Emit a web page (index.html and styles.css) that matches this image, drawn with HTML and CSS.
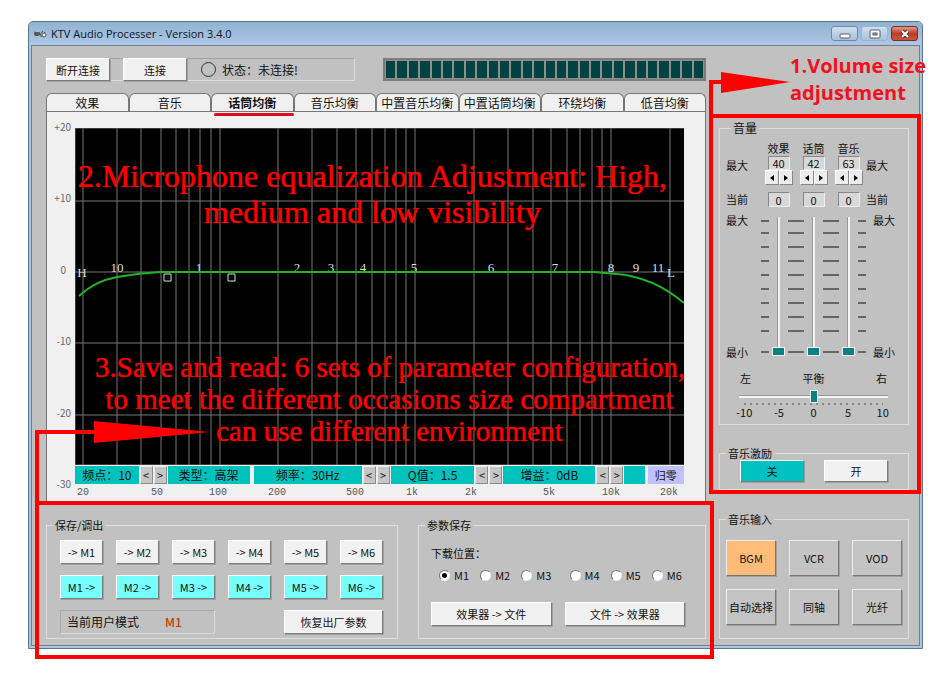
FILE: index.html
```html
<!DOCTYPE html>
<html lang="zh-CN">
<head>
<meta charset="utf-8">
<title>KTV Audio Processer - Version 3.4.0</title>
<link rel="stylesheet" href="styles.css">
</head>
<body>
<div class="window">
  <header class="titlebar">
    <svg class="app-icon" viewBox="0 0 14 10" width="14" height="10" aria-hidden="true">
      <ellipse cx="4" cy="5" rx="3" ry="2" fill="#555"/><path d="M1 3l3 1M7 6l3-4M8 8l4-5M6 3l2 4" stroke="#555" fill="none"/><circle cx="11" cy="6" r="2" fill="#fff" stroke="#555"/>
    </svg>
    <h1 class="title">KTV Audio Processer - Version 3.4.0</h1>
    <div class="win-controls">
      <button class="win-btn" aria-label="最小化"><svg viewBox="0 0 12 10" width="12" height="10"><rect x="1" y="5" width="10" height="4" rx="1" fill="#fff" stroke="#55606e"/></svg></button>
      <button class="win-btn faded" aria-label="最大化"><svg viewBox="0 0 12 10" width="12" height="10"><rect x="1" y="1" width="10" height="8" rx="1" fill="#fff" stroke="#55606e"/><rect x="4" y="4" width="4" height="2" fill="#9ab" stroke="#55606e"/></svg></button>
      <button class="win-btn close" aria-label="关闭"><svg viewBox="0 0 12 10" width="12" height="10"><path d="M3 2l6 6M9 2l-6 6" stroke="#5b3030" stroke-width="4"/><path d="M3 2l6 6M9 2l-6 6" stroke="#fff" stroke-width="2"/></svg></button>
    </div>
  </header>

  <div class="client">
    <main class="main">
      <div class="toolbar">
        <div class="connection">
          <button class="btn">断开连接</button>
          <button class="btn">连接</button>
          <span class="lamp"></span>
          <span class="status">状态：未连接!</span>
        </div>
        <div class="meter" role="img" aria-label="电平">
          <i></i><i></i><i></i><i></i><i></i><i></i><i></i><i></i><i></i><i></i><i></i><i></i><i></i><i></i>
          <i></i><i></i><i></i><i></i><i></i><i></i><i></i><i></i><i></i><i></i><i></i><i></i><i></i><i></i>
        </div>
      </div>

      <nav class="tabs">
        <button class="tab">效果</button>
        <button class="tab">音乐</button>
        <button class="tab active">话筒均衡</button>
        <button class="tab">音乐均衡</button>
        <button class="tab">中置音乐均衡</button>
        <button class="tab">中置话筒均衡</button>
        <button class="tab">环绕均衡</button>
        <button class="tab">低音均衡</button>
      </nav>

      <section class="eq">
        <div class="gain-axis">
          <span>+20</span><span>+10</span><span class="zero">0</span><span>-10</span><span>-20</span><span>-30</span>
        </div>
        <div class="plot">
          <svg class="graph" viewBox="0 0 609 337">
            <rect width="609" height="337" fill="#000"/>
            <path class="grid-line" d="M8 0V337M42 0V337M66 0V337M86 0V337M101 0V337M114 0V337M125 0V337M136 0V337M145 0V337M203 0V337M237 0V337M262 0V337M281 0V337M297 0V337M310 0V337M321 0V337M331 0V337M340 0V337M399 0V337M433 0V337M458 0V337M476 0V337M492 0V337M505 0V337M517 0V337M527 0V337M536 0V337M595 0V337M0 73H609M0 144H609M0 215H609M0 287H609M0 0H609M0 337H609M0 0V337"/>
            <g class="node-labels">
              <text x="7" y="149">H</text><text x="42" y="144">10</text><text x="124" y="144">1</text><text x="222" y="144">2</text><text x="256" y="144">3</text><text x="288" y="144">4</text><text x="339" y="144">5</text><text x="416" y="144">6</text><text x="480" y="144">7</text><text x="536" y="144">8</text><text x="561" y="144">9</text><text x="583" y="144">11</text><text x="596" y="149">L</text>
            </g>
            <path class="curve" d="M4 168Q20 153 42 149T86 144H519L542 146Q578 149 609 175"/>
            <path class="handles" d="M89 146h7v7h-7zM153 146h7v7h-7z"/>
          </svg>
          <p class="note note-mic">2.Microphone equalization Adjustment: High,<br>medium and low visibility</p>
          <p class="note note-save">3.Save and read: 6 sets of parameter configuration,<br>to meet the different occasions size compartment<br>can use different environment</p>
        </div>
        <div class="params">
          <span class="param">频点：10</span>
          <button class="step" aria-label="上一频点">&lt;</button><button class="step" aria-label="下一频点">&gt;</button>
          <span class="param type">类型：高架</span>
          <span class="param">频率：30Hz</span>
          <button class="step" aria-label="降低频率">&lt;</button><button class="step" aria-label="提高频率">&gt;</button>
          <span class="param">Q值：1.5</span>
          <button class="step" aria-label="降低Q值">&lt;</button><button class="step" aria-label="提高Q值">&gt;</button>
          <span class="param">增益：0dB</span>
          <button class="step" aria-label="降低增益">&lt;</button><button class="step" aria-label="提高增益">&gt;</button>
          <span class="param"></span>
          <button class="reset">归零</button>
        </div>
        <svg class="freq-axis" viewBox="0 0 609 18">
          <text x="8" y="11">20</text><text x="82" y="11">50</text><text x="143" y="11">100</text><text x="202" y="11">200</text><text x="280" y="11">500</text><text x="337" y="11">1k</text><text x="396" y="11">2k</text><text x="474" y="11">5k</text><text x="536" y="11">10k</text><text x="594" y="11">20k</text>
        </svg>
      </section>

      <div class="lower">
        <fieldset class="group presets">
          <legend>保存/调出</legend>
          <div class="preset-grid">
            <button class="btn">-&gt; M1</button><button class="btn">-&gt; M2</button><button class="btn">-&gt; M3</button><button class="btn">-&gt; M4</button><button class="btn">-&gt; M5</button><button class="btn">-&gt; M6</button>
            <button class="btn cyan">M1 -&gt;</button><button class="btn cyan">M2 -&gt;</button><button class="btn cyan">M3 -&gt;</button><button class="btn cyan">M4 -&gt;</button><button class="btn cyan">M5 -&gt;</button><button class="btn cyan">M6 -&gt;</button>
            <div class="mode"><span>当前用户模式</span><output>M1</output></div>
            <button class="btn factory">恢复出厂参数</button>
          </div>
        </fieldset>
        <fieldset class="group files">
          <legend>参数保存</legend>
          <p class="slot-title">下载位置：</p>
          <div class="slots">
            <label><input type="radio" name="slot" checked>M1</label>
            <label><input type="radio" name="slot">M2</label>
            <label><input type="radio" name="slot">M3</label>
            <label class="second"><input type="radio" name="slot">M4</label>
            <label><input type="radio" name="slot">M5</label>
            <label><input type="radio" name="slot">M6</label>
          </div>
          <div class="file-actions">
            <button class="btn">效果器 -&gt; 文件</button>
            <button class="btn">文件 -&gt; 效果器</button>
          </div>
        </fieldset>
        <div class="frame frame-lower"></div>
        <svg class="pointer pointer-lower" viewBox="0 0 175 84" width="175" height="84" aria-hidden="true"><path d="M0 84V9H59V0L175 11L59 22V13H4V84Z"/></svg>
      </div>
    </main>

    <aside class="side">
      <p class="callout">1.Volume size<br>adjustment</p>
      <div class="levels">
        <fieldset class="group volume">
          <legend class="large">音量</legend>
          <div class="channels">
            <div class="row-labels"><span>最大</span><span>当前</span></div>
            <div class="channel">
              <label for="max-fx">效果</label>
              <input class="num" id="max-fx" value="40">
              <div class="spin"><button aria-label="减"><svg viewBox="0 0 4 6" width="4" height="6"><path d="M4 0V6L0 3z"/></svg></button><button aria-label="加"><svg viewBox="0 0 4 6" width="4" height="6"><path d="M0 0V6L4 3z"/></svg></button></div>
              <input class="num now" aria-label="效果当前" value="0">
            </div>
            <div class="channel">
              <label for="max-mic">话筒</label>
              <input class="num" id="max-mic" value="42">
              <div class="spin"><button aria-label="减"><svg viewBox="0 0 4 6" width="4" height="6"><path d="M4 0V6L0 3z"/></svg></button><button aria-label="加"><svg viewBox="0 0 4 6" width="4" height="6"><path d="M0 0V6L4 3z"/></svg></button></div>
              <input class="num now" aria-label="话筒当前" value="0">
            </div>
            <div class="channel">
              <label for="max-music">音乐</label>
              <input class="num" id="max-music" value="63">
              <div class="spin"><button aria-label="减"><svg viewBox="0 0 4 6" width="4" height="6"><path d="M4 0V6L0 3z"/></svg></button><button aria-label="加"><svg viewBox="0 0 4 6" width="4" height="6"><path d="M0 0V6L4 3z"/></svg></button></div>
              <input class="num now" aria-label="音乐当前" value="0">
            </div>
            <div class="row-labels"><span>最大</span><span>当前</span></div>
          </div>
          <div class="faders">
            <div class="ends"><span>最大</span><span>最小</span></div>
            <div class="fader">
              <svg viewBox="0 0 35 139" width="35" height="139" aria-hidden="true"><path class="ticks" d="M0 4H8M27 4H35M0 16H8M27 16H35M0 30H8M27 30H35M0 44H8M27 44H35M0 58H8M27 58H35M0 72H8M27 72H35M0 86H8M27 86H35M0 100H8M27 100H35M0 114H8M27 114H35M0 135H8M27 135H35"/></svg>
              <input type="range" class="vertical" min="0" max="100" value="0" aria-label="效果音量">
            </div>
            <div class="fader">
              <svg viewBox="0 0 35 139" width="35" height="139" aria-hidden="true"><path class="ticks" d="M0 4H8M27 4H35M0 16H8M27 16H35M0 30H8M27 30H35M0 44H8M27 44H35M0 58H8M27 58H35M0 72H8M27 72H35M0 86H8M27 86H35M0 100H8M27 100H35M0 114H8M27 114H35M0 135H8M27 135H35"/></svg>
              <input type="range" class="vertical" min="0" max="100" value="0" aria-label="话筒音量">
            </div>
            <div class="fader">
              <svg viewBox="0 0 35 139" width="35" height="139" aria-hidden="true"><path class="ticks" d="M0 4H8M27 4H35M0 16H8M27 16H35M0 30H8M27 30H35M0 44H8M27 44H35M0 58H8M27 58H35M0 72H8M27 72H35M0 86H8M27 86H35M0 100H8M27 100H35M0 114H8M27 114H35M0 135H8M27 135H35"/></svg>
              <input type="range" class="vertical" min="0" max="100" value="0" aria-label="音乐音量">
            </div>
            <div class="ends right"><span>最大</span><span>最小</span></div>
          </div>
          <div class="balance">
            <div class="balance-labels"><span>左</span><label for="balance">平衡</label><span>右</span></div>
            <input type="range" class="horizontal" id="balance" min="-10" max="10" value="0">
            <div class="dots"></div>
            <div class="balance-scale"><span>-10</span><span>-5</span><span>0</span><span>5</span><span>10</span></div>
          </div>
        </fieldset>
        <fieldset class="group excite">
          <legend>音乐激励</legend>
          <div class="excite-row"><button class="btn teal">关</button><button class="btn">开</button></div>
        </fieldset>
        <div class="frame frame-levels"></div>
        <svg class="pointer pointer-levels" viewBox="0 0 81 44" width="81" height="44" aria-hidden="true"><path d="M0 44V8H12V0L81 10L12 21V12H4V44Z"/></svg>
      </div>
      <fieldset class="group sources">
        <legend>音乐输入</legend>
        <div class="source-grid">
          <button class="btn source selected">BGM</button><button class="btn source">VCR</button><button class="btn source">VOD</button>
          <button class="btn source">自动选择</button><button class="btn source">同轴</button><button class="btn source">光纤</button>
        </div>
      </fieldset>
    </aside>
  </div>
</div>
</body>
</html>
```
FILE: styles.css
```css
* { box-sizing: border-box; }

body {
  margin: 0;
  padding: 21px 27px 20px 28px;
  background: #fff;
  color: #111;
  font: 11px/14px "Noto Sans CJK SC", sans-serif;
}

button, input, output { font: inherit; color: inherit; }
button { padding: 0; white-space: nowrap; }
p, h1 { margin: 0; }
svg { display: block; }

/* Window chrome */
.window {
  border: 1px solid #5d7386;
  border-radius: 5px 5px 0 0;
  background: #a9c6e2;
  padding: 0 2px 2px;
}

.titlebar {
  display: flex;
  align-items: center;
  height: 23px;
  margin: 0 -2px;
  padding: 0 4px;
  border-radius: 4px 4px 0 0;
  background: linear-gradient(#90b2d1, #adc8e6);
}

.title {
  flex: 1;
  margin-left: 4px;
  font: 11px/20px "Open Sans", sans-serif;
  color: #112;
}

.win-controls { display: flex; gap: 3px; }

.win-btn {
  display: flex;
  align-items: center;
  justify-content: center;
  width: 27px;
  height: 15px;
  border: 1px solid #7388a4;
  border-radius: 3px;
  background: linear-gradient(#cfdff0, #a9c1dd);
}
.win-btn.faded { border-color: #9bb3cf; }
.win-btn.close { border-color: #722f2c; background: linear-gradient(#dc9b8e, #bf3c2a 50%, #c9543d); }

.client {
  display: flex;
  gap: 13px;
  border: 1px solid #777d84;
  padding: 12px 10px 6px 14px;
  background: #c1c1c1;
}

.main { flex: 1; min-width: 0; }
.side { position: relative; flex: 0 0 190px; padding-top: 63px; }

/* Shared controls */
.btn {
  border: 1px solid;
  border-color: #fff #7d7d7d #7d7d7d #fff;
  background: #f1f1f1;
  box-shadow: 1px 1px 0 #a0a0a0;
}
.btn.cyan { background: #7ff; }
.btn.teal { background: #00c2c0; }

.group {
  margin: 0;
  min-width: 0;
  border: 1px solid #dedede;
  padding: 0;
}
.group legend { margin-left: 6px; padding: 0 2px; }
.group legend.large { margin-left: 5px; font-size: 12px; }

/* Toolbar */
.toolbar { display: flex; justify-content: space-between; height: 23px; }

.connection {
  display: flex;
  align-items: stretch;
  width: 309px;
  border: 1px solid;
  border-color: #a4a4a4 #dcdcdc #dcdcdc #a4a4a4;
}
.connection .btn { width: 64px; margin: -1px 14px -1px -1px; }
.lamp {
  align-self: center;
  width: 15px;
  height: 15px;
  border: 1px solid #333;
  border-radius: 50%;
}
.status { margin-left: 6px; font-size: 12px; line-height: 22px; }

.meter {
  display: grid;
  grid-template-columns: repeat(28, 1fr);
  gap: 2px;
  width: 323px;
  border: 2px solid #7c7c7c;
  padding: 1px;
  background: #8e8e8e;
}
.meter i { background: #004242; }

/* Tabs */
.tabs { display: flex; margin-top: 12px; }
.tab {
  position: relative;
  flex: 1 1 0;
  height: 18px;
  border: 1px solid #777;
  border-bottom: 0;
  border-radius: 6px 6px 0 0;
  background: #f0f0f0;
  font-size: 12px;
  line-height: 16px;
}
.tab.active { font-weight: 700; }
.tab.active::after {
  content: "";
  position: absolute;
  top: 19px;
  left: 2px;
  right: -1px;
  height: 3px;
  border-radius: 2px;
  background: #dc0e18;
}

/* Equalizer */
.eq {
  display: grid;
  grid-template-columns: 28px 1fr;
  padding: 16px 21px 0 0;
  border: 1px solid #777;
  background: #f0f0f0;
}

.gain-axis {
  grid-row: 1 / 3;
  display: flex;
  flex-direction: column;
  justify-content: space-between;
  margin: -8px 4px -7px 0;
  text-align: right;
  color: #666;
  font: 10px/14px "Noto Sans CJK SC", sans-serif;
}
.gain-axis .zero { padding-right: 5px; }

.plot { position: relative; }
.graph { width: 100%; }
.grid-line { fill: none; stroke: #777; stroke-width: 1; }
.node-labels text { fill: #ddd; font: 13px "Liberation Serif", serif; text-anchor: middle; }
.curve { fill: none; stroke: #22b422; stroke-width: 2; }
.handles { fill: none; stroke: #ddd; }

.note {
  position: absolute;
  left: -14px;
  right: 0;
  color: #f00;
  text-align: center;
  white-space: nowrap;
  font-family: "Liberation Serif", serif;
  text-shadow: 0 0 1px #f00;
  pointer-events: none;
}
.note-mic { top: 30px; font-size: 32px; line-height: 36px; }
.note-save { top: 223px; left: 20px; font-size: 29px; line-height: 32px; }

.params {
  grid-column: 2;
  display: grid;
  grid-template-columns: 63fr 13px 13px 84fr 107fr 13px 13px 83fr 13px 13px 91fr 13px 13px 20fr 38fr;
  gap: 1px;
  padding-top: 1px;
  height: 19px;
}
.param {
  background: #00c2bc;
  font-size: 12px;
  line-height: 18px;
  text-align: center;
  white-space: nowrap;
  overflow: hidden;
}
.param.type { margin-right: 3px; }
.step {
  border: 1px solid;
  border-color: #eee #8a8a8a #8a8a8a #eee;
  background: #c6c6c6;
  font: 11px/14px "Noto Sans CJK SC", sans-serif;
}
.reset { border: 0; margin-left: 2px; background: #c2c0fb; }

.freq-axis { grid-column: 2; width: 100%; }
.freq-axis text { fill: #555; font: 10px "Liberation Mono", monospace; text-anchor: middle; }

/* Lower groups */
.lower {
  position: relative;
  display: grid;
  grid-template-columns: 352fr 288fr;
  gap: 20px;
  margin-top: 15px;
}

.preset-grid {
  display: grid;
  grid-template-columns: repeat(6, 1fr);
  grid-template-rows: 24px 24px 24px;
  gap: 11px 13px;
  padding: 8px 14px 4px 13px;
}
.mode {
  grid-column: 1 / 4;
  display: flex;
  align-items: center;
  gap: 26px;
  padding-left: 6px;
  border: 1px solid;
  border-color: #a8a8a8 #dcdcdc #dcdcdc #a8a8a8;
  font-size: 12px;
}
.mode output { color: #c33c00; font-weight: 500; }
.factory { grid-column: 5 / 7; }

.files { padding: 0 12px; }
.files legend { margin-left: -6px; }
.slot-title { margin-top: 14px; }
.slots { display: flex; margin-top: 8px; padding-left: 8px; }
.slots label { display: flex; align-items: center; gap: 4px; width: 42px; }
.slots .second { margin-left: 7px; }
.slots input {
  appearance: none;
  width: 11px;
  height: 11px;
  margin: 0;
  border: 1px solid;
  border-color: #777 #eee #eee #777;
  border-radius: 50%;
  background: #fff;
}
.slots input:checked { background: radial-gradient(#000 0 2px, #fff 3px); }
.file-actions {
  display: grid;
  grid-template-columns: 1fr 1fr;
  gap: 13px;
  margin: 20px 8px 0 0;
}
.file-actions .btn { height: 24px; }

/* Volume panel */
.levels { position: relative; }
.volume { padding: 0 6px; height: 304px; }

.channels { display: flex; margin-top: 6px; }
.row-labels {
  display: flex;
  flex-direction: column;
  gap: 20px;
  width: 35px;
  padding-top: 17px;
}
.channel { display: flex; flex-direction: column; align-items: center; width: 35px; }
.channel label { line-height: 15px; }
.num {
  width: 22px;
  height: 14px;
  padding: 0;
  border: 1px solid;
  border-color: #888 #eee #eee #888;
  background: #d8d8d8;
  text-align: center;
  line-height: 12px;
}
.num.now { margin-top: 7px; height: 15px; }
.spin { display: flex; }
.spin button {
  display: flex;
  align-items: center;
  justify-content: center;
  width: 14px;
  height: 15px;
  border: 1px solid;
  border-color: #fff #888 #888 #fff;
  background: #ececec;
}

.faders { display: flex; margin-top: 10px; }
.ends {
  display: flex;
  flex-direction: column;
  justify-content: space-between;
  width: 35px;
  margin: -4px 0 -3px;
}
.ends.right { padding-left: 7px; }
.fader { display: grid; width: 35px; height: 139px; }
.fader > * { grid-area: 1 / 1; justify-self: center; }
.ticks { stroke: #666; stroke-width: 2; fill: none; }

input[type="range"] { appearance: none; margin: 0; background: none; }
.vertical { writing-mode: vertical-lr; direction: rtl; width: 13px; height: 139px; }
.vertical::-webkit-slider-runnable-track { width: 3px; background: #f4f4f4; border-left: 1px solid #999; }
.vertical::-webkit-slider-thumb {
  appearance: none;
  width: 13px;
  height: 9px;
  margin-left: -6px;
  border: 1px solid #eee;
  background: #0a8080;
}

.balance { margin: 15px 14px 0 13px; }
.balance-labels { display: flex; justify-content: space-between; padding: 0 1px; }
.horizontal { display: block; width: 100%; height: 13px; }
.balance .horizontal { margin-top: 5px; }
.horizontal::-webkit-slider-runnable-track { height: 3px; background: #f4f4f4; border-top: 1px solid #999; }
.horizontal::-webkit-slider-thumb {
  appearance: none;
  width: 8px;
  height: 13px;
  margin-top: -6px;
  border: 1px solid #eee;
  background: #0a8080;
}
.dots {
  height: 2px;
  margin: 0 5px;
  background: repeating-linear-gradient(90deg, #888 0 2px, transparent 2px 6px);
}
.balance-scale { display: grid; grid-template-columns: repeat(5, 1fr); margin: 0 -12px; text-align: center; }

.excite { margin-top: 21px; height: 44px; }
.excite-row { display: grid; grid-template-columns: 1fr 1fr; gap: 20px; padding: 0 20px; }
.excite .btn { height: 22px; }

.sources { margin-top: 22px; height: 127px; }
.source-grid {
  display: grid;
  grid-template-columns: repeat(3, 1fr);
  grid-auto-rows: 36px;
  gap: 13px;
  padding: 14px 6px 0;
}
.source { background: #c4c4c4; border-color: #eee #777 #777 #eee; }
.source.selected { background: #ffbc78; }

/* Red annotations */
.callout {
  position: absolute;
  top: -6px;
  left: 71px;
  color: #f4101c;
  font: 700 20px/27px "Open Sans", sans-serif;
  white-space: nowrap;
}
.frame { position: absolute; border: 4px solid #f00; pointer-events: none; }
.frame-lower { inset: -17px -8px -20px -11px; }
.frame-levels { inset: -7px -12px -4px -10px; }
.pointer { position: absolute; fill: #f00; pointer-events: none; }
.pointer-lower { left: -11px; top: -97px; }
.pointer-levels { left: -10px; top: -49px; }
```
